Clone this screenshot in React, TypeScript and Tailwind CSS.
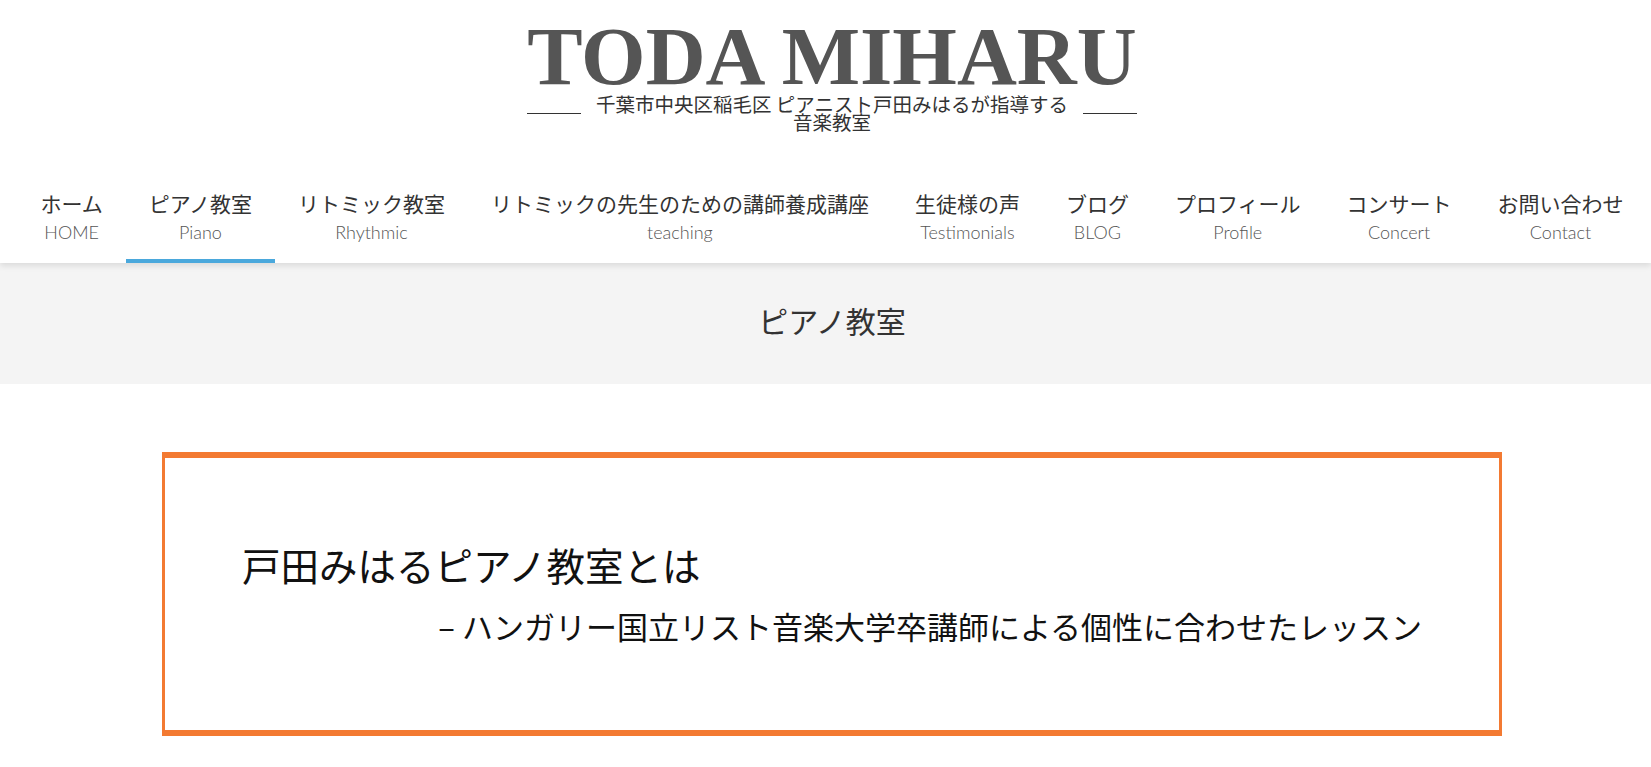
const jp = "font-['Noto_Sans_CJK_JP','Noto_Sans',sans-serif]";

const navigation = [
  { ja: "ホーム", en: "HOME" },
  { ja: "ピアノ教室", en: "Piano", active: true },
  { ja: "リトミック教室", en: "Rhythmic" },
  { ja: "リトミックの先生のための講師養成講座", en: "teaching" },
  { ja: "生徒様の声", en: "Testimonials" },
  { ja: "ブログ", en: "BLOG" },
  { ja: "プロフィール", en: "Profile" },
  { ja: "コンサート", en: "Concert" },
  { ja: "お問い合わせ", en: "Contact" },
];

export default function App() {
  return (
    <div className="min-h-screen bg-white">
      {/* Header */}
      <header className="relative z-10 bg-white shadow-[0_3px_6px_rgba(0,0,0,0.10)]">
        <div className="flex flex-col items-center pl-[13px] pt-[15px]">
          <h1 className="font-['Liberation_Serif',serif] text-[83px] font-bold leading-[82px] text-[#555555]">
            TODA MIHARU
          </h1>
          <div className={`${jp} mt-[-2px] flex flex-col items-center text-[19.5px] leading-[18px] text-[#333]`}>
            <div className="flex items-end">
              <span className="mb-[-1px] w-[54px] border-b border-[#333]" />
              <span className="mx-[15px]">千葉市中央区稲毛区 ピアニスト戸田みはるが指導する</span>
              <span className="mb-[-1px] w-[54px] border-b border-[#333]" />
            </div>
            <div>音楽教室</div>
          </div>

          {/* Navigation */}
          <nav className="mt-[58px] flex items-end justify-center">
            {navigation.map((item) => (
              <a
                key={item.en}
                href="#"
                className={`flex flex-col items-center border-b-4 px-[23px] pb-[15px] ${
                  item.active ? "border-[#4aa8dc]" : "border-transparent"
                }`}
              >
                <span className={`${jp} whitespace-nowrap text-[21px] leading-[28px] text-[#333]`}>{item.ja}</span>
                <span className="mt-[3px] font-['Lato',sans-serif] text-[18px] font-light leading-[24px] text-[#555]">
                  {item.en}
                </span>
              </a>
            ))}
          </nav>
        </div>
      </header>

      {/* Page title */}
      <div className="flex h-[121px] items-center justify-center bg-[#f4f4f4] pb-2 pl-[13px]">
        <h2 className={`${jp} text-[30px] font-normal leading-[40px] text-[#333]`}>ピアノ教室</h2>
      </div>

      {/* Main */}
      <main className="pl-[13px] pt-[68px]">
        <div className="mx-auto w-[1340px] border-x-[3px] border-y-[6px] border-[#f37a32] px-[77px] pb-[82px] pt-[78px] text-[#111]">
          <h3 className={`${jp} text-[38.5px] leading-[57px]`}>戸田みはるピアノ教室とは</h3>
          <p className={`${jp} mt-[10px] text-right text-[31px] leading-[45px]`}>
            – ハンガリー国立リスト音楽大学卒講師による個性に合わせたレッスン
          </p>
        </div>
      </main>
    </div>
  );
}
